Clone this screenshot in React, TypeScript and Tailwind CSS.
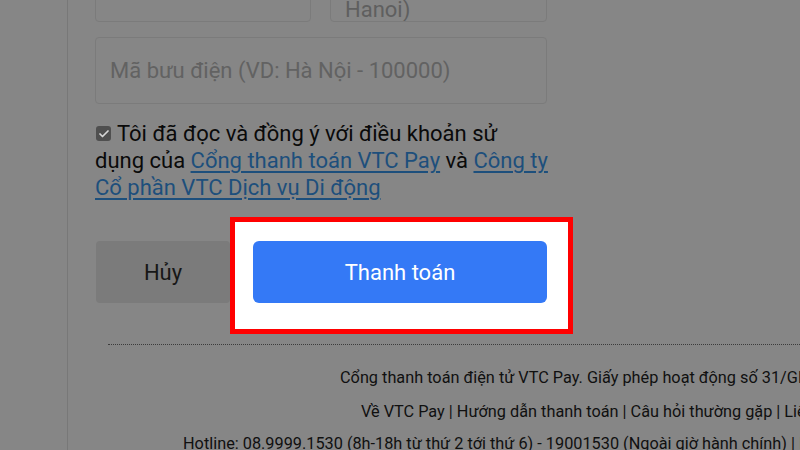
import { Check } from 'lucide-react'

export default function App() {
  return (
    <div
      className="h-[450px] w-[800px] overflow-hidden bg-[#868686] flex"
      style={{ fontFamily: 'Roboto, "Noto Sans", sans-serif' }}
    >
      {/* Left rail */}
      <div className="w-[68px] shrink-0 border-r border-[#787878]" />

      <div className="flex-1 min-w-0 flex flex-col">
        {/* Form */}
        <div className="pl-[27px] -mt-[45px] flex flex-col">
          <div className="flex gap-[19px]">
            <div className="h-[67px] w-[216px] shrink-0 rounded-[4px] border border-[#7b7b7b]" />
            <div className="h-[67px] w-[217px] shrink-0 overflow-hidden rounded-[4px] border border-[#7b7b7b] pl-[14px] pt-[13px] text-[22px] leading-[27px] text-[#5f5f5f] flex flex-col whitespace-nowrap">
              <span>Thành phố (VD:</span>
              <span>Hanoi)</span>
            </div>
          </div>

          <div className="mt-[15px] h-[67px] w-[452px] rounded-[4px] border border-[#7b7b7b] pl-[14px] flex items-center text-[22px] text-[#626262]">
            Mã bưu điện (VD: Hà Nội - 100000)
          </div>

          {/* Terms */}
          <div className="mt-[16px] text-[22px] leading-[27px] text-[#0a0a0a] whitespace-nowrap">
            <div className="flex items-center">
              <span className="ml-[1px] mr-[6px] h-[15px] w-[15px] rounded-[3px] bg-[#4f4f4f] flex items-center justify-center">
                <Check className="h-[12px] w-[12px] text-[#d6d6d6]" strokeWidth={3.5} />
              </span>
              <span>Tôi đã đọc và đồng ý với điều khoản sử</span>
            </div>
            <div>
              dụng của <a className="text-[#1d4f7c] underline underline-offset-[3px]">Cổng thanh toán VTC Pay</a> và{' '}
              <a className="text-[#1d4f7c] underline underline-offset-[3px]">Công ty</a>
            </div>
            <div>
              <a className="text-[#1d4f7c] underline underline-offset-[3px]">Cổ phần VTC Dịch vụ Di động</a>
            </div>
          </div>

          {/* Actions */}
          <div className="mt-[40px] flex items-start">
            <button className="ml-[1px] h-[62px] w-[134px] shrink-0 rounded-[4px] bg-[#7b7b7b] text-[22px] text-[#171717]">
              Hủy
            </button>
            <div className="-mt-[24px] shrink-0 border-[5px] border-[#ff0000] bg-white pt-[19px] pb-[26px] pl-[18px] pr-[21px]">
              <button className="h-[62px] w-[294px] rounded-[6px] bg-[#3479f6] text-[22px] text-white">
                Thanh toán
              </button>
            </div>
          </div>
        </div>

        {/* Footer */}
        <div className="mt-[10px] ml-[40px] border-t border-dotted border-[#3c3c3c]" />
        <div className="flex flex-col text-[16.3px] leading-[24px] text-[#101010] whitespace-nowrap">
          <div className="mt-[21px] ml-[272px]">
            Cổng thanh toán điện tử VTC Pay. Giấy phép hoạt động số 31/GP-NHNN
          </div>
          <div className="mt-[10px] ml-[293px]">
            Về VTC Pay | Hướng dẫn thanh toán | Câu hỏi thường gặp | Liên hệ
          </div>
          <div className="mt-[8px] ml-[115px]">
            Hotline: 08.9999.1530 (8h-18h từ thứ 2 tới thứ 6) - 19001530 (Ngoài giờ hành chính) | Email: hotro@vtcpay.vn
          </div>
        </div>
      </div>
    </div>
  )
}
